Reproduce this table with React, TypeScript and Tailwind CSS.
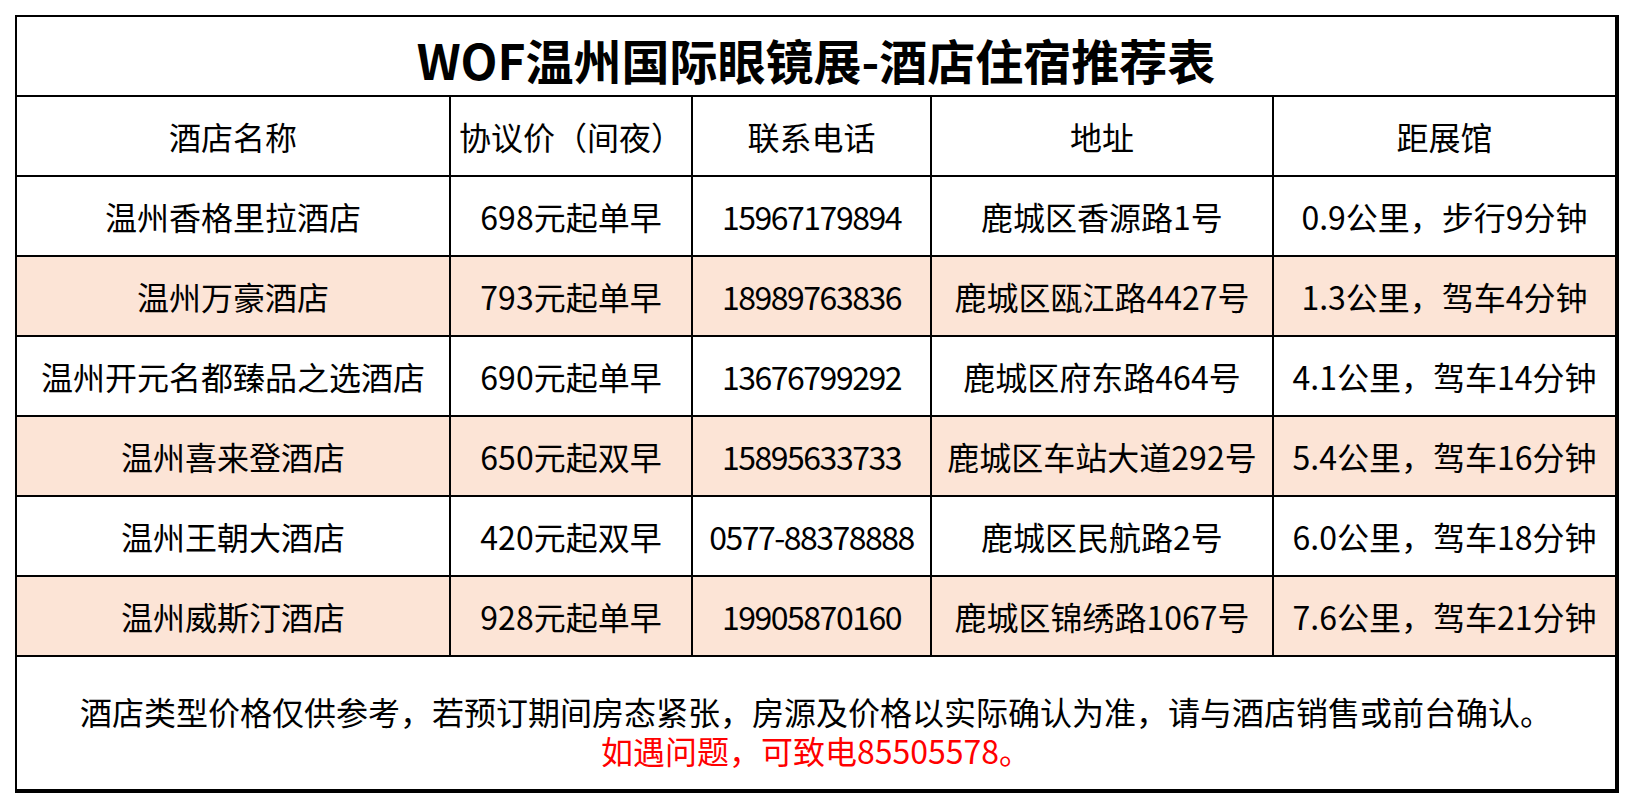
type Hotel = {
  name: string;
  price: string;
  phone: string;
  address: string;
  distance: string;
};

const hotels: Hotel[] = [
  { name: "温州香格里拉酒店", price: "698元起单早", phone: "15967179894", address: "鹿城区香源路1号", distance: "0.9公里，步行9分钟" },
  { name: "温州万豪酒店", price: "793元起单早", phone: "18989763836", address: "鹿城区瓯江路4427号", distance: "1.3公里，驾车4分钟" },
  { name: "温州开元名都臻品之选酒店", price: "690元起单早", phone: "13676799292", address: "鹿城区府东路464号", distance: "4.1公里，驾车14分钟" },
  { name: "温州喜来登酒店", price: "650元起双早", phone: "15895633733", address: "鹿城区车站大道292号", distance: "5.4公里，驾车16分钟" },
  { name: "温州王朝大酒店", price: "420元起双早", phone: "0577-88378888", address: "鹿城区民航路2号", distance: "6.0公里，驾车18分钟" },
  { name: "温州威斯汀酒店", price: "928元起单早", phone: "19905870160", address: "鹿城区锦绣路1067号", distance: "7.6公里，驾车21分钟" },
];

const headers = ["酒店名称", "协议价（间夜）", "联系电话", "地址", "距展馆"];

function Cell({ children, shaded, tight }: { children: React.ReactNode; shaded?: boolean; tight?: boolean }) {
  return (
    <div
      className={
        "flex h-[78px] items-center justify-center whitespace-nowrap text-[32px] leading-none text-black " +
        (shaded ? "bg-[#fce4d6]" : "bg-white") +
        (tight ? " tracking-[-1.5px]" : "")
      }
    >
      {children}
    </div>
  );
}

export default function App() {
  return (
    <div className="min-h-screen bg-white pt-[15px] pl-[15px] font-['Noto_Sans_CJK_SC',sans-serif]">
      <div className="w-[1604px] border-t-2 border-l-2 border-r-4 border-b-4 border-black">
        <div className="grid grid-cols-[432px_240px_237px_340px_341px] gap-[2px] bg-black">
          <div className="col-span-5 flex h-[78px] items-center justify-center bg-white pt-[6px] text-[48px] font-bold leading-none text-black">
            WOF温州国际眼镜展-酒店住宿推荐表
          </div>

          {headers.map((h) => (
            <Cell key={h}>{h}</Cell>
          ))}

          {hotels.map((h, i) => {
            const shaded = i % 2 === 1;
            return [
              <Cell key={h.name + "-n"} shaded={shaded}>{h.name}</Cell>,
              <Cell key={h.name + "-p"} shaded={shaded}>{h.price}</Cell>,
              <Cell key={h.name + "-t"} shaded={shaded} tight>{h.phone}</Cell>,
              <Cell key={h.name + "-a"} shaded={shaded}>{h.address}</Cell>,
              <Cell key={h.name + "-d"} shaded={shaded}>{h.distance}</Cell>,
            ];
          })}

          <div className="col-span-5 flex h-[132px] flex-col items-center gap-[7px] bg-white pt-[38px] text-[32px] leading-none">
            <p className="text-black">酒店类型价格仅供参考，若预订期间房态紧张，房源及价格以实际确认为准，请与酒店销售或前台确认。</p>
            <p className="text-[#ff0000]">如遇问题，可致电85505578。</p>
          </div>
        </div>
      </div>
    </div>
  );
}
